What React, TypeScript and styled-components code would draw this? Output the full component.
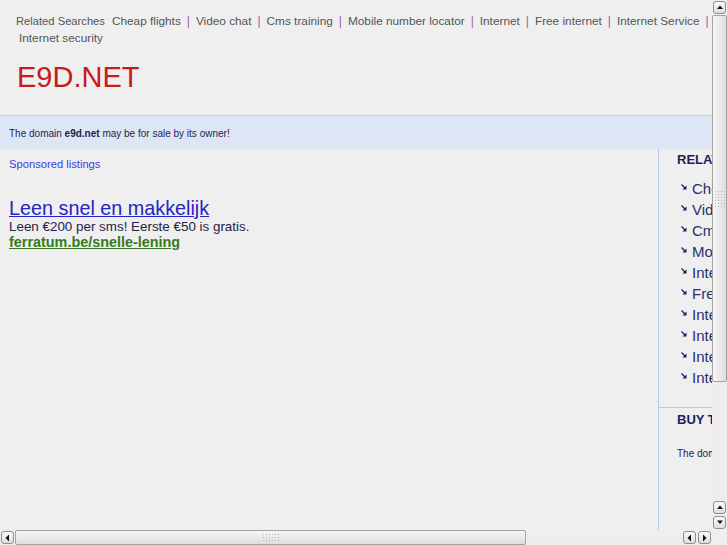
import React from "react";
import styled, { createGlobalStyle } from "styled-components";

const Global = createGlobalStyle`
  html, body { margin: 0; padding: 0; background: #efefef; overflow: hidden; }
  body { font-family: "Liberation Sans", Arial, sans-serif; }
  a { cursor: pointer; }
`;

const Window = styled.div`
  display: flex;
  width: 727px;
  height: 545px;
  overflow: hidden;
  background: #efefef;
`;

const MainColumn = styled.div`
  display: flex;
  flex-direction: column;
  width: 712px;
`;

const Viewport = styled.div`
  height: 530px;
  width: 712px;
  overflow: hidden;
`;

const Page = styled.div`
  width: 930px;
  height: 530px;
  display: flex;
  flex-direction: column;
`;

const Header = styled.div`
  padding: 13px 0 0 16px;
  height: 115px;
  box-sizing: border-box;
`;

const Nav = styled.div`
  width: 700px;
  display: flex;
  flex-wrap: wrap;
  align-items: baseline;
  color: #555;
`;

const NavLabel = styled.span`
  font-size: 11.2px;
  line-height: 17px;
  margin-right: 4px;
`;

const NavGroup = styled.span`
  display: flex;
  align-items: baseline;
  white-space: nowrap;
  height: 17px;
`;

const NavLink = styled.a`
  font-size: 11.8px;
  line-height: 17px;
  color: #555;
  padding-left: 3px;
  text-decoration: none;
`;

const Sep = styled.span`
  font-size: 12px;
  line-height: 17px;
  color: #a4569f;
  margin: 0 3px 0 6px;
`;

const Logo = styled.div`
  margin-top: 13px;
  font-size: 29px;
  line-height: 34px;
  color: #c71a1a;
  padding-left: 1px;
`;

const Band = styled.div`
  height: 34px;
  box-sizing: border-box;
  border-top: 1px solid #c4d1ea;
  background: #dee6f5;
  display: flex;
  align-items: center;
  padding: 1px 0 0 9px;
  font-size: 10px;
  color: #1e1e4e;
`;

const Body = styled.div`
  flex: 1;
  display: flex;
`;

const LeftCol = styled.div`
  width: 659px;
  box-sizing: border-box;
  border-right: 1px solid #b5c9ea;
  padding: 8px 0 0 9px;
`;

const Sponsored = styled.div`
  font-size: 11.2px;
  line-height: 14px;
  color: #3b3be0;
`;

const Ad = styled.div`
  margin-top: 27px;
`;

const AdTitle = styled.a`
  display: block;
  width: fit-content;
  font-size: 19.8px;
  line-height: 20px;
  color: #2424c8;
  text-decoration: underline;
`;

const AdDesc = styled.div`
  font-size: 13.4px;
  line-height: 17px;
  color: #23234a;
`;

const AdUrl = styled.a`
  display: block;
  width: fit-content;
  margin-top: -1px;
  font-size: 14.4px;
  line-height: 17px;
  font-weight: bold;
  color: #387a1f;
  text-decoration: underline;
`;

const RightCol = styled.div`
  flex: 1;
  display: flex;
  flex-direction: column;
`;

const Section = styled.div<{ $divider?: boolean }>`
  padding: ${(p) => (p.$divider ? "4px 0 0 18px" : "3px 0 19px 18px")};
  border-top: ${(p) => (p.$divider ? "1px solid #b5c9ea" : "none")};
`;

const SideHeading = styled.div`
  font-size: 13px;
  line-height: 16px;
  font-weight: bold;
  color: #1b1f5c;
`;

const SideList = styled.ul`
  list-style: none;
  margin: 10px 0 0 0;
  padding: 0 0 0 4px;
`;

const SideItem = styled.li`
  display: flex;
  align-items: center;
  gap: 5px;
  height: 21px;
  font-size: 15px;
  color: #2a2f6c;
`;

const SideText = styled.div`
  margin-top: 19px;
  font-size: 10px;
  line-height: 14px;
  color: #23234a;
`;

const Arrow = () => (
  <svg width="6" height="6" viewBox="0 0 6 6" style={{ marginTop: -3 }}>
    <path d="M0.5 0.5 L4.5 4.5" stroke="#1b1f5c" strokeWidth="1.3" />
    <path d="M5.5 1.5 L5.5 5.5 L1.5 5.5 Z" fill="#1b1f5c" />
  </svg>
);

/* ---- scrollbars ---- */

const trough = `
  background-color: #f1f1f1;
  background-image: repeating-conic-gradient(#e7e7e7 0 25%, #f5f5f5 0 50%);
  background-size: 2px 2px;
`;

const VBar = styled.div`
  width: 15px;
  height: 530px;
  display: flex;
  flex-direction: column;
  ${trough}
`;

const HBar = styled.div`
  height: 15px;
  display: flex;
  align-items: stretch;
  ${trough}
`;

const Corner = styled.div`
  height: 15px;
  background: #efefef;
`;

const VBarWrap = styled.div`
  display: flex;
  flex-direction: column;
  width: 15px;
`;

const Btn = styled.div`
  width: 13px;
  height: 13px;
  margin: 1px;
  box-sizing: border-box;
  border: 1px solid #8e8e8e;
  border-radius: 3px;
  background: linear-gradient(#fbfbfb, #dedede);
  display: flex;
  align-items: center;
  justify-content: center;
  flex: none;
`;

const Thumb = styled.div<{ $vertical?: boolean }>`
  flex: none;
  box-sizing: border-box;
  border: 1px solid #a3a3a3;
  border-radius: 2px;
  display: flex;
  align-items: center;
  justify-content: center;
  background: ${(p) =>
    p.$vertical
      ? "linear-gradient(to right, #f6f6f6, #dedede)"
      : "linear-gradient(#f6f6f6, #dedede)"};
`;

const Grip = styled.div<{ $w: number; $h: number }>`
  width: ${(p) => p.$w}px;
  height: ${(p) => p.$h}px;
  background-image: radial-gradient(circle, #b4b4b4 0.8px, transparent 1px);
  background-size: 3px 3px;
`;

const Spacer = styled.div`
  flex: 1;
`;

type Dir = "up" | "down" | "left" | "right";
const tri: Record<Dir, string> = {
  up: "M1 5 L4 1.5 L7 5 Z",
  down: "M1 1.5 L4 5 L7 1.5 Z",
  left: "M5 0.5 L1.5 4 L5 7.5 Z",
  right: "M2 0.5 L5.5 4 L2 7.5 Z",
};

const ArrowBtn = ({ dir }: { dir: Dir }) => {
  const vertical = dir === "up" || dir === "down";
  return (
    <Btn>
      <svg width={vertical ? 8 : 7} height={vertical ? 7 : 8} viewBox={vertical ? "0 0 8 7" : "0 0 7 8"}>
        <path d={tri[dir]} fill="#111" />
      </svg>
    </Btn>
  );
};

const links = [
  "Cheap flights",
  "Video chat",
  "Cms training",
  "Mobile number locator",
  "Internet",
  "Free internet",
  "Internet Service",
  "Internet security",
];

const side = [
  "Cheap flights",
  "Video chat",
  "Cms training",
  "Mobile number locator",
  "Internet",
  "Free internet",
  "Internet Service",
  "Internet security",
  "Internet providers",
  "Internet marketing",
];

export default function App() {
  return (
    <Window>
      <Global />
      <MainColumn>
        <Viewport>
          <Page>
            <Header>
              <Nav>
                <NavLabel>Related Searches</NavLabel>
                {links.map((l, i) => (
                  <NavGroup key={l}>
                    <NavLink>{l}</NavLink>
                    {i < links.length - 1 && <Sep>|</Sep>}
                  </NavGroup>
                ))}
              </Nav>
              <Logo>E9D.NET</Logo>
            </Header>
            <Band>
              <span>
                The domain <b>e9d.net</b> may be for sale by its owner!
              </span>
            </Band>
            <Body>
              <LeftCol>
                <Sponsored>Sponsored listings</Sponsored>
                <Ad>
                  <AdTitle>Leen snel en makkelijk</AdTitle>
                  <AdDesc>Leen €200 per sms! Eerste €50 is gratis.</AdDesc>
                  <AdUrl>ferratum.be/snelle-lening</AdUrl>
                </Ad>
              </LeftCol>
              <RightCol>
                <Section>
                  <SideHeading>RELATED SEARCHES</SideHeading>
                  <SideList>
                    {side.map((s) => (
                      <SideItem key={s}>
                        <Arrow />
                        {s}
                      </SideItem>
                    ))}
                  </SideList>
                </Section>
                <Section $divider>
                  <SideHeading>BUY THIS DOMAIN</SideHeading>
                  <SideText>The domain e9d.net may be for sale by its owner!</SideText>
                </Section>
              </RightCol>
            </Body>
          </Page>
        </Viewport>
        <HBar>
          <ArrowBtn dir="left" />
          <Thumb style={{ width: 511 }}>
            <Grip $w={17} $h={9} />
          </Thumb>
          <Spacer />
          <ArrowBtn dir="left" />
          <ArrowBtn dir="right" />
        </HBar>
      </MainColumn>
      <VBarWrap>
        <VBar>
          <ArrowBtn dir="up" />
          <Thumb $vertical style={{ height: 367 }}>
            <Grip $w={12} $h={17} />
          </Thumb>
          <Spacer />
          <ArrowBtn dir="up" />
          <ArrowBtn dir="down" />
        </VBar>
        <Corner />
      </VBarWrap>
    </Window>
  );
}
